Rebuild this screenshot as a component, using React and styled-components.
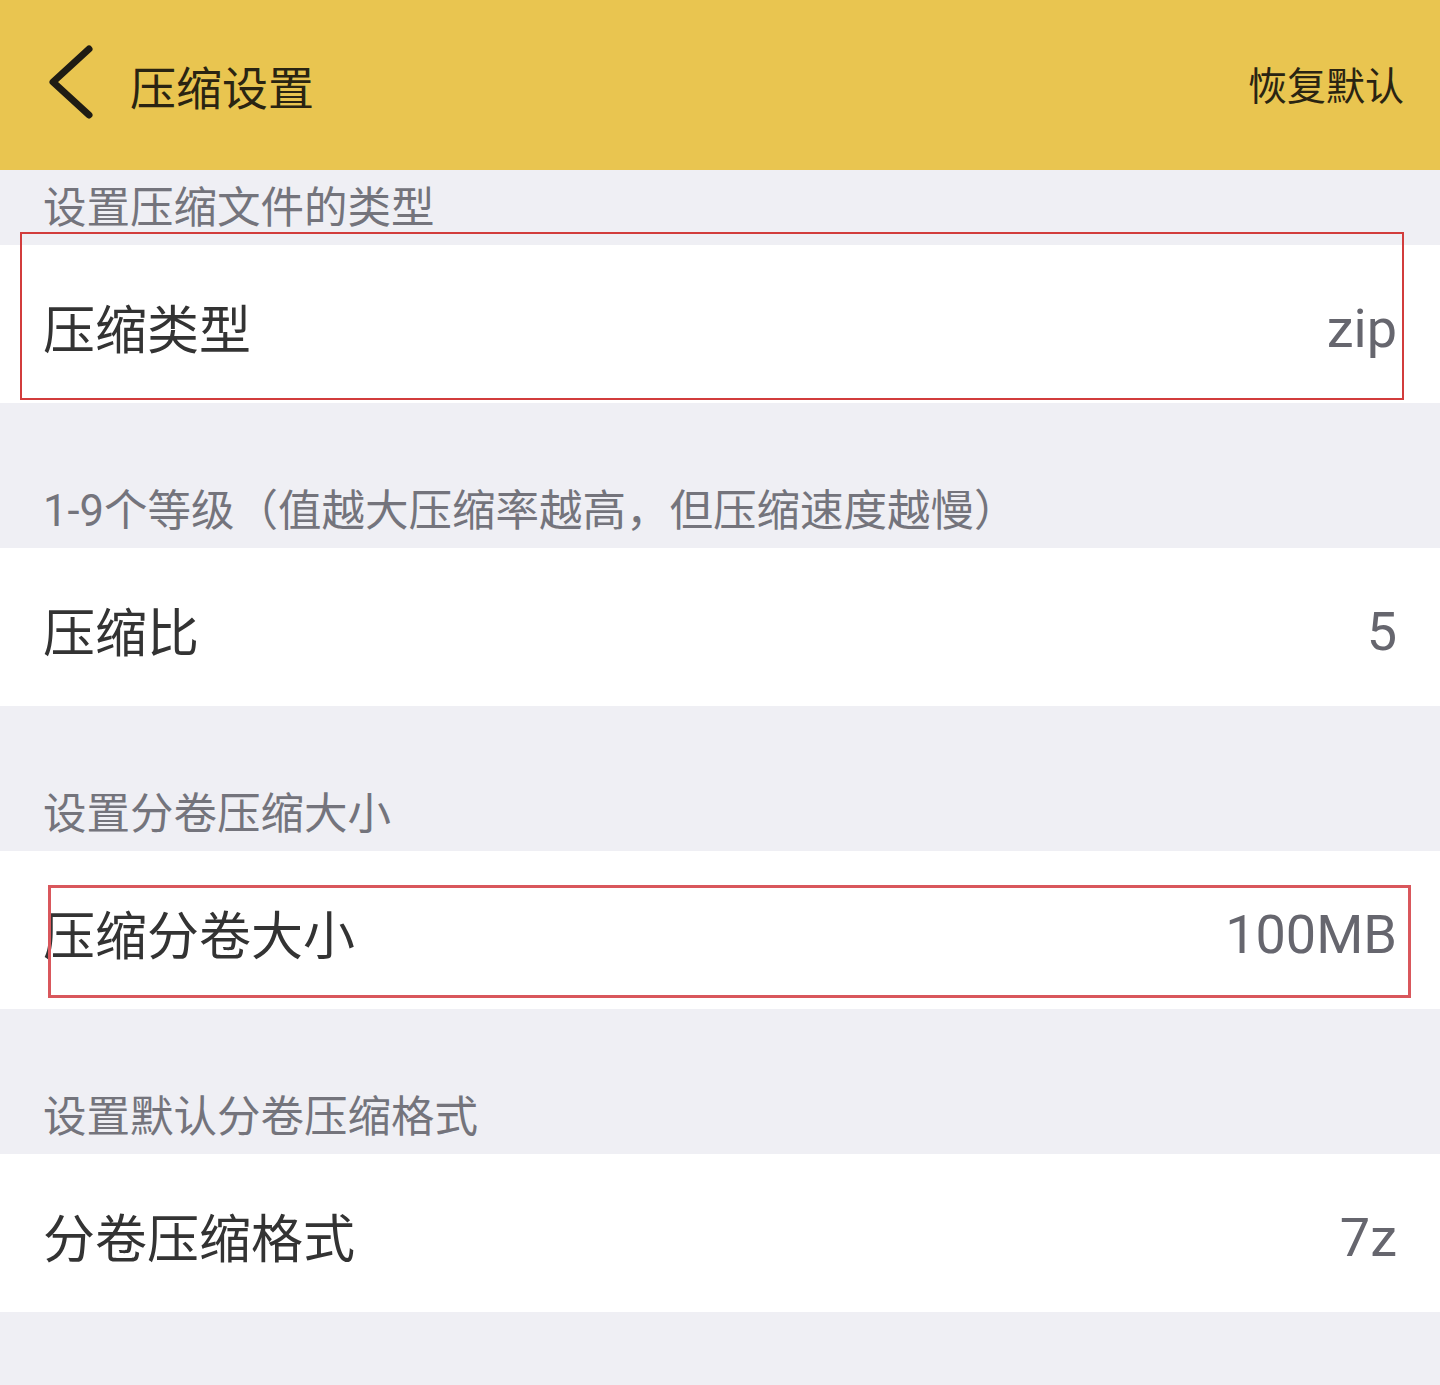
import React from "react";
import styled, { createGlobalStyle } from "styled-components";

const Global = createGlobalStyle`
  html, body { margin: 0; padding: 0; background: #efeff4; }
  body { font-family: Roboto, "Noto Sans CJK SC", "Noto Sans", sans-serif; }
  * { box-sizing: border-box; }
`;

const Page = styled.div`
  width: 1440px;
  min-height: 1385px;
  background: #efeff4;
  display: flex;
  flex-direction: column;
`;

const TopBar = styled.header`
  height: 170px;
  background: #e9c550;
  display: flex;
  align-items: center;
  padding: 0 36px 0 44px;
`;

const BackButton = styled.button`
  width: 60px;
  height: 80px;
  border: 0;
  background: none;
  padding: 0;
  display: flex;
  align-items: center;
  cursor: pointer;
  margin-top: -4px;
`;

const Title = styled.h1`
  margin: 0 0 0 26px;
  font-family: "Noto Sans CJK SC", sans-serif;
  font-weight: 400;
  font-size: 46px;
  line-height: 1;
  color: #2a2412;
  flex: 1;
`;

const Reset = styled.span`
  font-family: "Noto Sans CJK SC", sans-serif;
  font-size: 39px;
  line-height: 1;
  color: #2a2412;
  margin-top: -4px;
`;

const Spacer = styled.div`
  height: 70px;
`;

const SectionHead = styled.div`
  height: 75px;
  display: flex;
  align-items: center;
  padding-left: 43px;
  font-family: Roboto, "Noto Sans CJK SC", sans-serif;
  font-size: 43.5px;
  line-height: 1;
  color: #74747c;
  padding-top: 2px;
`;

const Row = styled.div`
  position: relative;
  height: 158px;
  background: #ffffff;
  display: flex;
  align-items: center;
  justify-content: space-between;
  padding: 0 43px 0 43px;
`;

const Label = styled.span`
  font-family: "Noto Sans CJK SC", sans-serif;
  font-size: 52px;
  line-height: 1;
  color: #333333;
  margin-top: 5px;
`;

const Value = styled.span`
  font-family: Roboto, "Noto Sans CJK SC", sans-serif;
  font-size: 54px;
  line-height: 1;
  color: #66666e;
  margin-top: 10px;
`;

const Mark = styled.div`
  position: absolute;
  left: ${(p) => p.$left}px;
  top: ${(p) => p.$top}px;
  width: ${(p) => p.$w}px;
  height: ${(p) => p.$h}px;
  border: ${(p) => p.$bw}px solid ${(p) => p.$color};
  pointer-events: none;
`;

const sections = [
  {
    head: "设置压缩文件的类型",
    label: "压缩类型",
    value: "zip",
    mark: { left: 20, top: -13, w: 1384, h: 168, bw: 2.5, color: "#d23c3c" },
  },
  {
    head: "1-9个等级（值越大压缩率越高，但压缩速度越慢）",
    label: "压缩比",
    value: "5",
  },
  {
    head: "设置分卷压缩大小",
    label: "压缩分卷大小",
    value: "100MB",
    mark: { left: 48, top: 34, w: 1363, h: 113, bw: 3, color: "#d9575c" },
  },
  {
    head: "设置默认分卷压缩格式",
    label: "分卷压缩格式",
    value: "7z",
  },
];

export default function App() {
  return (
    <Page>
      <Global />
      <TopBar>
        <BackButton aria-label="返回">
          <svg width="60" height="80" viewBox="0 0 60 80">
            <path
              d="M45 6 L9 39 L45 72"
              fill="none"
              stroke="#1f1c14"
              strokeWidth="7"
              strokeLinecap="round"
              strokeLinejoin="round"
            />
          </svg>
        </BackButton>
        <Title>压缩设置</Title>
        <Reset>恢复默认</Reset>
      </TopBar>
      {sections.map((s, i) => (
        <React.Fragment key={s.label}>
          {i > 0 && <Spacer />}
          <SectionHead>{s.head}</SectionHead>
          <Row>
            <Label>{s.label}</Label>
            <Value>{s.value}</Value>
            {s.mark && (
              <Mark
                $left={s.mark.left}
                $top={s.mark.top}
                $w={s.mark.w}
                $h={s.mark.h}
                $bw={s.mark.bw}
                $color={s.mark.color}
              />
            )}
          </Row>
        </React.Fragment>
      ))}
    </Page>
  );
}
